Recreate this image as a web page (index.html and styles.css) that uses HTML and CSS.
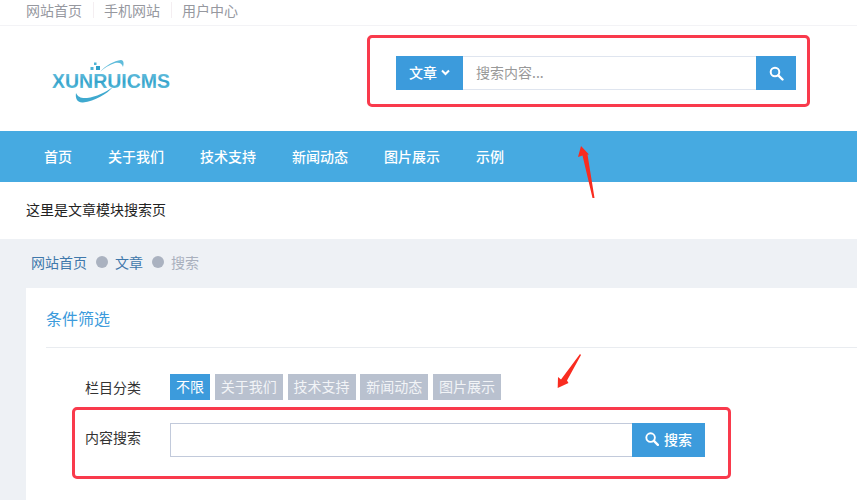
FILE: index.html
```html
<!DOCTYPE html>
<html lang="zh-CN">
<head>
<meta charset="utf-8">
<title>搜索</title>
<link rel="stylesheet" href="styles.css">
</head>
<body>
<div class="page">
  <div class="topbar">
    <a class="top-link">网站首页</a>
    <a class="top-link">手机网站</a>
    <a class="top-link">用户中心</a>
  </div>
  <header class="header">
    <svg class="logo" width="140" height="46" viewBox="0 0 140 46" aria-label="XUNRUICMS">
      <defs>
        <linearGradient id="lg" x1="0" y1="0" x2="0" y2="1">
          <stop offset="0" stop-color="#7fcbe6"/>
          <stop offset="0.55" stop-color="#35a3cb"/>
          <stop offset="1" stop-color="#6cc4de"/>
        </linearGradient>
      </defs>
      <path d="M49 13C55 6 63 2 70 1C73 1 73 5 72 8C71 4 68 3 64 4C58 6 53 9 49 13Z" fill="#5fbcdb"/>
      <path d="M62 28C56 35 44 42 32 43.500C27 44 24 40 25 34C27 38 30 39.500 36 39C45 38 55 33 62 28Z" fill="#3fa9cf"/>
      <rect x="39.500" y="8" width="3" height="3" fill="#4db3d6"/>
      <rect x="45" y="7" width="4" height="4" fill="#2e9fc8"/>
      <rect x="43" y="3.500" width="2.500" height="2.500" fill="#4db3d6"/>
      <text class="logo-text" x="1" y="29" textLength="118" lengthAdjust="spacingAndGlyphs" fill="url(#lg)">XUNRUICMS</text>
    </svg>
    <form class="top-search">
      <button type="button" class="module-btn">文章
        <svg width="9" height="7" viewBox="0 0 9 7"><path d="M1 1.500L4.500 5L8 1.500" fill="none" stroke="#fff" stroke-width="2"/></svg>
      </button>
      <div class="top-input">搜索内容...</div>
      <button type="button" class="top-go">
        <svg width="15" height="15" viewBox="0 0 15 15"><circle cx="6" cy="6" r="4.300" fill="none" stroke="#fff" stroke-width="2"/><path d="M9.300 9.300L13.500 13.500" stroke="#fff" stroke-width="2.400" stroke-linecap="round"/></svg>
      </button>
    </form>
  </header>
  <nav class="nav">
    <a class="nav-item">首页</a>
    <a class="nav-item">关于我们</a>
    <a class="nav-item">技术支持</a>
    <a class="nav-item">新闻动态</a>
    <a class="nav-item">图片展示</a>
    <a class="nav-item">示例</a>
  </nav>
  <div class="intro">这里是文章模块搜索页</div>
  <main class="content">
    <div class="crumbs">
      <a class="crumb">网站首页</a><i class="dot"></i>
      <a class="crumb">文章</a><i class="dot"></i>
      <span class="crumb-now">搜索</span>
    </div>
    <section class="card">
      <h2 class="card-title">条件筛选</h2>
      <div class="filter-row">
        <span class="filter-label">栏目分类</span>
        <div class="tags">
          <a class="tag tag-on">不限</a>
          <a class="tag">关于我们</a>
          <a class="tag">技术支持</a>
          <a class="tag">新闻动态</a>
          <a class="tag">图片展示</a>
        </div>
      </div>
      <div class="search-row">
        <span class="filter-label filter-label-up">内容搜索</span>
        <div class="search-field"></div>
        <button type="button" class="search-btn">
          <svg width="14" height="14" viewBox="0 0 15 15"><circle cx="6" cy="6" r="4.600" fill="none" stroke="#fff" stroke-width="2"/><path d="M9.500 9.500L13.800 13.800" stroke="#fff" stroke-width="2.400" stroke-linecap="round"/></svg>
          搜索
        </button>
      </div>
    </section>
  </main>
  <div class="mark mark-top"></div>
  <div class="mark mark-bottom"></div>
  <svg class="arrow arrow-up" width="20" height="56" viewBox="0 0 20 56"><path d="M4 1L12 9.500L10.500 9.500L17.500 53L15.500 53L5.500 10.500L1 12Z" fill="#f92c20"/></svg>
  <svg class="arrow arrow-down" width="26" height="36" viewBox="0 0 26 36"><path d="M23 0L24 1L10 26.500L11.500 29L.7 34L1 23L4 25.500Z" fill="#f92c20"/></svg>
</div>
</body>
</html>
```
FILE: styles.css
```css
* { box-sizing: border-box; }
html, body { margin: 0; padding: 0; }
body {
  background: #fff;
  font-family: "Noto Sans CJK SC", "Liberation Sans", sans-serif;
  font-size: 14px;
  color: #333;
}
.page {
  position: relative;
  width: 857px;
  height: 500px;
  overflow: hidden;
}
.topbar {
  display: flex;
  align-items: center;
  height: 26px;
  padding: 0 0 6px 26px;
  border-bottom: 1px solid #f3f3f6;
}
.top-link {
  color: #96989f;
  line-height: 16px;
  padding-right: 11px;
  margin-right: 10px;
  border-right: 1px solid #f4eef1;
}
.top-link:last-child { border-right: 0; }
.header {
  display: flex;
  align-items: flex-start;
  justify-content: space-between;
  height: 105px;
  padding: 30px 61px 0 51px;
}
.logo { margin-top: 3px; }
.logo-text {
  font-family: "Liberation Sans", sans-serif;
  font-weight: 700;
  font-size: 21px;
}
.top-search {
  display: flex;
  width: 400px;
  height: 34px;
}
.module-btn {
  display: flex;
  align-items: center;
  justify-content: center;
  gap: 4px;
  width: 67px;
  border: 0;
  padding: 0 0 2px;
  background: #3c9bdc;
  color: #fff;
  font: inherit;
  font-weight: 500;
}
.top-input {
  flex: 1;
  display: flex;
  align-items: center;
  padding: 0 0 2px 13px;
  border: 1px solid #dfe5ef;
  border-left: 0;
  border-right: 0;
  color: #999;
}
.top-go {
  display: flex;
  align-items: center;
  justify-content: center;
  width: 40px;
  border: 0;
  padding: 0;
  background: #3c9bdc;
}
.nav {
  display: flex;
  gap: 36px;
  height: 51px;
  padding: 0 0 2px 44px;
  align-items: center;
  background: #46aae1;
}
.nav-item {
  color: #fff;
  font-weight: 500;
}
.intro {
  height: 57px;
  padding: 17px 0 0 26px;
  line-height: 20px;
  color: #222;
}
.content {
  height: 261px;
  padding-left: 26px;
  background: #eef1f5;
}
.crumbs {
  display: flex;
  align-items: center;
  height: 49px;
  padding: 0 0 3px 5px;
}
.crumb { color: #3f78ab; }
.crumb-now { color: #a9b0bd; }
.dot {
  width: 12px;
  height: 12px;
  margin: 0 7px 0 9px;
  border-radius: 50%;
  background: #aab2c0;
}
.card {
  background: #fff;
  height: 212px;
  padding-left: 20px;
}
.card-title {
  margin: 0;
  height: 60px;
  padding-top: 18px;
  border-bottom: 1px solid #e9ecf0;
  font-size: 16px;
  font-weight: 400;
  line-height: 24px;
  color: #3c9bdc;
}
.filter-row, .search-row {
  display: flex;
  align-items: center;
}
.filter-row { margin-top: 26px; }
.search-row { margin-top: 23px; }
.filter-label {
  width: 124px;
  padding-left: 39px;
  color: #333;
}
.filter-label-up { margin-bottom: 6px; }
.tags {
  display: flex;
  gap: 4.750px;
}
.tag {
  height: 26px;
  line-height: 24px;
  padding: 0 6px;
  background: #b9c1cf;
  color: #f2f4f7;
}
.tag-on {
  background: #3c9bdc;
  color: #fff;
}
.search-field {
  width: 462px;
  height: 34px;
  border: 1px solid #c2cadb;
  border-right: 0;
}
.search-btn {
  display: flex;
  align-items: center;
  justify-content: center;
  gap: 5px;
  width: 73px;
  height: 34px;
  padding: 0 0 3px;
  border: 0;
  background: #3c9bdc;
  color: #fff;
  font: inherit;
  font-weight: 500;
}
.mark {
  position: absolute;
  border: 3px solid #f93a4c;
  border-radius: 5px;
}
.mark-top {
  left: 367px;
  top: 35px;
  width: 443px;
  height: 72px;
}
.mark-bottom {
  left: 72px;
  top: 407px;
  width: 659px;
  height: 72px;
}
.arrow { position: absolute; }
.arrow-up { left: 577px; top: 145px; }
.arrow-down { left: 557px; top: 354px; }
```
